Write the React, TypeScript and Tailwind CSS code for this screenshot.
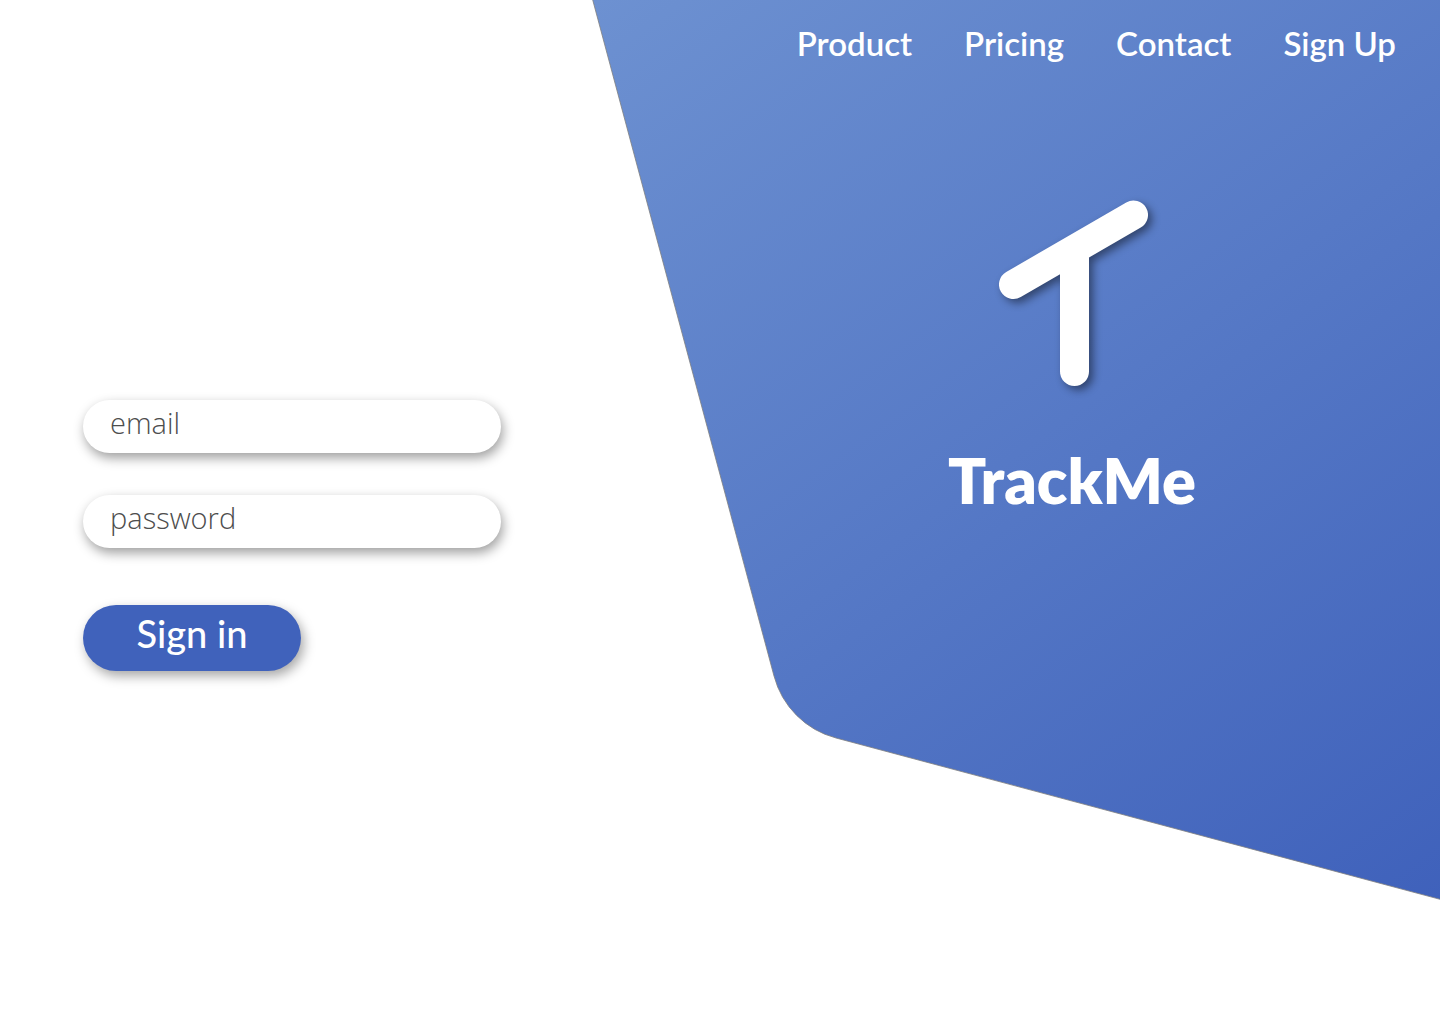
const links = ["Product", "Pricing", "Contact", "Sign Up"];

function Backdrop() {
  return (
    <svg
      aria-hidden="true"
      className="pointer-events-none absolute inset-0 h-full w-full"
      viewBox="0 0 1440 1024"
      preserveAspectRatio="none"
    >
      <defs>
        <linearGradient id="panel" gradientUnits="userSpaceOnUse" x1="593" y1="0" x2="1345" y2="1040">
          <stop offset="0" stopColor="#6d91d1" />
          <stop offset="1" stopColor="#3d5fba" />
        </linearGradient>
      </defs>
      <path
        d="M582 -40L774 676A87 87 0 0 0 836 738L1480 910V-40Z"
        fill="url(#panel)"
        stroke="#808080"
        strokeOpacity="0.8"
        strokeWidth="1"
      />
    </svg>
  );
}

function Logo() {
  return (
    <svg
      aria-hidden="true"
      className="h-[190px] w-[152px] overflow-visible drop-shadow-[4px_4px_4px_rgba(0,0,0,0.45)]"
      viewBox="0 0 152 190"
      fill="none"
      stroke="white"
      strokeWidth="29"
      strokeLinecap="round"
    >
      <path d="M17.500 86.500L137.500 17" />
      <path d="M78.500 60V173.500" />
    </svg>
  );
}

function Field({ id, type, label }: { id: string; type: string; label: string }) {
  return (
    <input
      id={id}
      type={type}
      aria-label={label}
      placeholder={label}
      className="block h-[53px] w-full rounded-full bg-white px-[27px] pb-2 font-['Open_Sans',sans-serif] text-[29px] font-light text-[#4d4d4d] shadow-[2px_5px_12px_rgba(0,0,0,0.38)] outline-none placeholder:text-[#4d4d4d] placeholder:opacity-100"
    />
  );
}

export default function App() {
  return (
    <div className="relative flex min-h-screen flex-col overflow-hidden bg-white font-['Lato',sans-serif]">
      <Backdrop />
      <header className="relative flex justify-end px-11 pt-[22px]">
        <nav className="flex gap-[52px]">
          {links.map((link) => (
            <a key={link} href="#" className="text-[33px] leading-[42px] font-semibold whitespace-nowrap text-white">
              {link}
            </a>
          ))}
        </nav>
      </header>
      <main className="relative grid grow grid-cols-[44fr_46fr] items-start">
        <form className="mt-84 ml-[83px] flex max-w-[418px] flex-col gap-[42px]">
          <Field id="email" type="email" label="email" />
          <Field id="password" type="password" label="password" />
          <button
            type="button"
            className="mt-[15px] h-[66px] w-[218px] rounded-full bg-[#4062bb] pb-[10px] text-[38px] leading-none font-medium text-white shadow-[3px_5px_12px_rgba(0,0,0,0.35)]"
          >
            Sign in
          </button>
        </form>
        <section className="mt-[134px] flex flex-col items-center gap-[56px]">
          <Logo />
          <h1 className="text-[63px] leading-[72px] font-extrabold text-white">TrackMe</h1>
        </section>
      </main>
    </div>
  );
}
